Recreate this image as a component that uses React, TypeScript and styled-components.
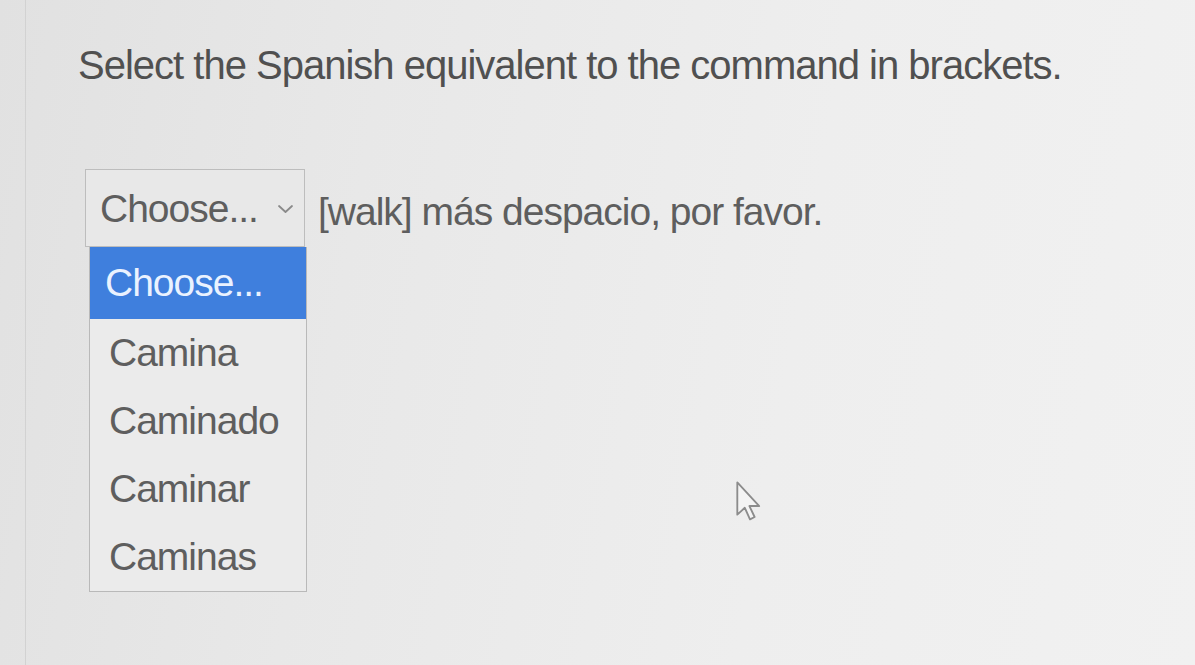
import React from 'react';
import styled, { createGlobalStyle } from 'styled-components';

const GlobalStyle = createGlobalStyle`
  html, body {
    margin: 0;
    padding: 0;
  }
  body {
    background: #e9e9e9;
    font-family: "Liberation Sans", Arial, Helvetica, sans-serif;
  }
`;

const Page = styled.main`
  position: relative;
  height: 665px;
  overflow: hidden;
  padding-left: 25px;
  box-sizing: border-box;
  background: linear-gradient(100deg, #e1e1e1 0%, #e8e8e8 30%, #eeeeee 65%, #f1f1f1 100%);
`;

const Panel = styled.section`
  height: 100%;
  border-left: 1px solid #d2d2d2;
  padding: 41px 0 0 52px;
  box-sizing: border-box;
`;

const Prompt = styled.h1`
  margin: 0;
  font-size: 40px;
  line-height: 48px;
  font-weight: 400;
  letter-spacing: -1px;
  color: #505050;
`;

const Sentence = styled.div`
  margin-top: 80px;
  margin-left: 7px;
  display: flex;
  align-items: center;
`;

const SelectWrap = styled.div`
  position: relative;
  width: 220px;
`;

const SelectBox = styled.div`
  height: 78px;
  box-sizing: border-box;
  border: 1px solid #bdbdbd;
  background: #e8e8e8;
  display: flex;
  align-items: center;
  justify-content: space-between;
  padding: 2px 10px 0 14px;
`;

const Label = styled.span`
  font-size: 39px;
  line-height: 48px;
  letter-spacing: -1px;
  color: #5e5e5e;
`;

const Rest = styled(Label)`
  margin-left: 13px;
  padding-top: 8px;
`;

const Menu = styled.ul`
  position: absolute;
  top: 100%;
  left: 4px;
  width: 218px;
  margin: 0;
  padding: 0;
  list-style: none;
  box-sizing: border-box;
  border: 1px solid #b9b9b9;
  border-top: none;
  background: #ebebeb;
`;

const Option = styled.li<{ $active?: boolean }>`
  height: ${p => (p.$active ? '72px' : '68px')};
  display: flex;
  align-items: center;
  padding-left: ${p => (p.$active ? '15px' : '19px')};
  font-size: 39px;
  letter-spacing: -1px;
  background: ${p => (p.$active ? '#3f7fdd' : 'transparent')};
  color: ${p => (p.$active ? '#eaf2ff' : '#5e5e5e')};
`;

const Pointer = styled.svg`
  position: absolute;
  left: 735px;
  top: 480px;
`;

const options = ['Camina', 'Caminado', 'Caminar', 'Caminas'];

function App() {
  return (
    <>
      <GlobalStyle />
      <Page>
        <Panel>
          <Prompt>Select the Spanish equivalent to the command in brackets.</Prompt>
          <Sentence>
            <SelectWrap>
              <SelectBox>
                <Label>Choose...</Label>
                <svg width="17" height="10" viewBox="0 0 17 10">
                  <path d="M2 2 L8.5 8 L15 2" fill="none" stroke="#8a8a8a" strokeWidth="1.8" strokeLinecap="round" strokeLinejoin="round" />
                </svg>
              </SelectBox>
              <Menu>
                <Option $active>Choose...</Option>
                {options.map(o => <Option key={o}>{o}</Option>)}
              </Menu>
            </SelectWrap>
            <Rest>[walk] más despacio, por favor.</Rest>
          </Sentence>
        </Panel>
        <Pointer width="30" height="44" viewBox="0 0 26 38">
          <path d="M2 2 L2 30 L8.5 24 L13 34 L17 32 L12.5 22.5 L21 22.5 Z" fill="#f4f4f4" stroke="#8c8c8c" strokeWidth="1.6" strokeLinejoin="round" />
        </Pointer>
      </Page>
    </>
  );
}

export default App;
